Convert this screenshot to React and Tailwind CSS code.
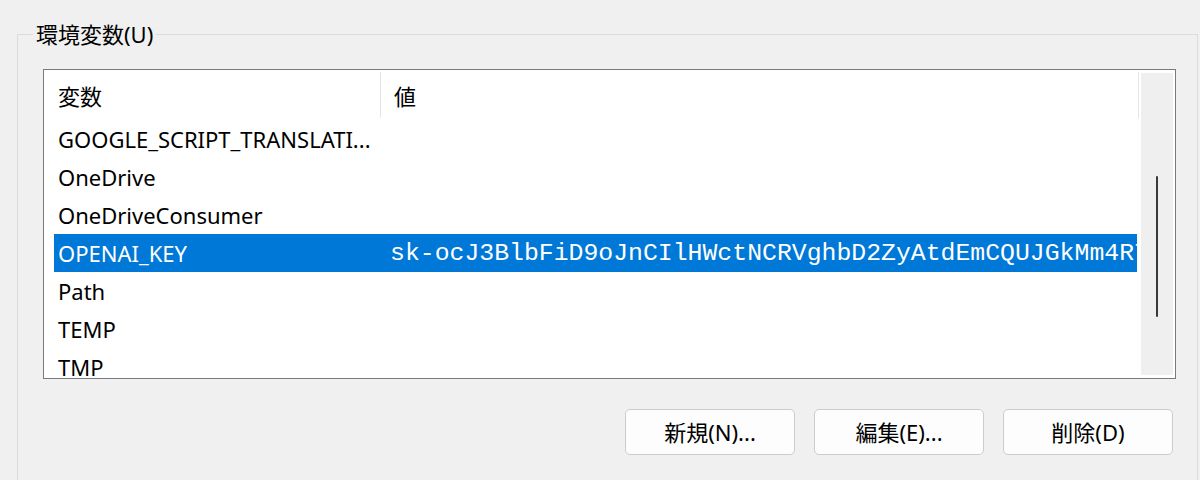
const rows = [
  { name: "GOOGLE_SCRIPT_TRANSLATI...", value: "" },
  { name: "OneDrive", value: "" },
  { name: "OneDriveConsumer", value: "" },
  { name: "OPENAI_KEY", value: "sk-ocJ3BlbFiD9oJnCIlHWctNCRVghbD2ZyAtdEmCQUJGkMm4R7", selected: true },
  { name: "Path", value: "" },
  { name: "TEMP", value: "" },
  { name: "TMP", value: "" },
];

const uiFont = "font-['Noto_Sans','Noto_Sans_CJK_JP',sans-serif]";

function Row({ row }) {
  return (
    <div
      className={
        "flex h-[38px] shrink-0 items-center ml-[10px] mr-[2px] " +
        (row.selected ? "bg-[#0078d7] text-white" : "text-black")
      }
    >
      <div className="w-[334px] shrink-0 pl-[4px] text-[22px] whitespace-nowrap overflow-hidden">
        {row.name}
      </div>
      <div className="flex-1 min-w-0 pl-[2px] overflow-hidden whitespace-nowrap font-['Liberation_Mono',monospace] text-[24.8px] leading-[38px]">
        {row.value}
      </div>
    </div>
  );
}

function Button({ children }) {
  return (
    <button className="w-[170px] h-[46px] rounded-[5px] border border-[#cccccc] bg-[#fdfdfd] text-[22px] text-black">
      {children}
    </button>
  );
}

export default function App() {
  return (
    <div className={"w-[1200px] h-[480px] overflow-hidden bg-[#f0f0f0] pt-[20px] pl-[17px] " + uiFont}>
      <fieldset className="w-[1181px] h-[520px] border border-[#dcdcdc]">
        <legend className="ml-[15px] px-[3px] text-[22px] leading-[28px] text-black">
          環境変数(U)
        </legend>

        <div className="pl-[25px] pr-[21px]">
          {/* list view */}
          <div className="mt-[21px] w-[1133px] h-[310px] border border-[#777b80] bg-white flex">
            <div className="flex-1 flex flex-col overflow-hidden">
              <div className="flex h-[50px] shrink-0 pt-[2px] text-[22px] text-black">
                <div className="w-[337px] shrink-0 flex items-center pl-[14px] pt-[2px] border-r border-[#e5e5e5] mb-[2px]">
                  変数
                </div>
                <div className="flex-1 flex items-center pl-[13px] pt-[2px] border-r border-[#e5e5e5] mb-[2px]">
                  値
                </div>
              </div>
              <div className="flex flex-col">
                {rows.map((r) => (
                  <Row key={r.name} row={r} />
                ))}
              </div>
            </div>
            <div className="w-[32px] shrink-0 my-[3px] mx-[2px] bg-[#efefef] flex justify-center pt-[103px]">
              <div className="w-[2px] h-[141px] bg-[#3a3a3a] rounded-full" />
            </div>
          </div>

          <div className="flex justify-end gap-[19px] mt-[30px] mr-[3px]">
            <Button>新規(N)...</Button>
            <Button>編集(E)...</Button>
            <Button>削除(D)</Button>
          </div>
        </div>
      </fieldset>
    </div>
  );
}
